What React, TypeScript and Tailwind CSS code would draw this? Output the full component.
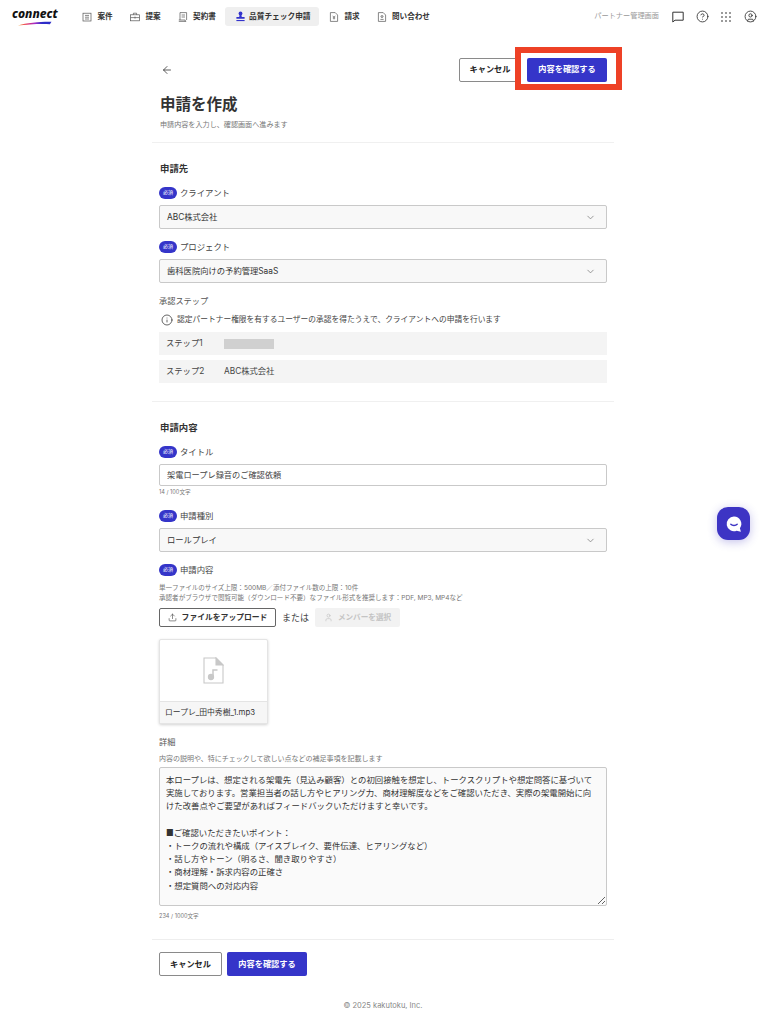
import React from "react";
import { ArrowLeft, ChevronDown, Info, CircleHelp, CircleUser, Upload, User } from "lucide-react";

const font = { fontFamily: '"Inter", "Noto Sans CJK JP", sans-serif' };

function CaseIcon() {
    return (
        <svg className="size-[10px] text-[#555]" viewBox="0 0 10 10" fill="none" stroke="currentColor" strokeWidth="0.7">
            <rect x="1" y="1.2" width="8" height="7.8" />
            <path d="M3 3.4h4M3 5.2h4M3 7h4" />
        </svg>
    );
}

function CaseBagIcon() {
    return (
        <svg className="size-[10px] text-[#555]" viewBox="0 0 10 10" fill="none" stroke="currentColor" strokeWidth="0.7">
            <rect x="0.6" y="2.8" width="8.8" height="6" />
            <path d="M3.4 2.8V1.2h3.2v1.6M0.6 5.6h8.8M5 4.6v2" />
        </svg>
    );
}

function ContractIcon() {
    return (
        <svg className="size-[10px] text-[#555]" viewBox="0 0 10 10" fill="none" stroke="currentColor" strokeWidth="0.7">
            <path d="M2 8V.6h6.6V8M.8 9.4h7.4M.8 8h6.4v1.4" />
            <path d="M3.6 3h3.4M3.6 5h3.4" />
        </svg>
    );
}

function StampIcon() {
    return (
        <svg className="size-[11px] text-[#3333cc]" viewBox="0 0 11 11" fill="currentColor">
            <circle cx="5.5" cy="2.4" r="1.9" />
            <path d="M4.6 3.6h1.8l.4 2.4H9.6v1.8H1.4V6h2.8z" />
            <rect x="1.4" y="9" width="8.2" height="1.1" />
        </svg>
    );
}

function BillIcon({ person }: { person?: boolean }) {
    return (
        <svg className="size-[10px] text-[#555]" viewBox="0 0 10 10" fill="none" stroke="currentColor" strokeWidth="0.7">
            <path d="M1.4.6h4.8l2.4 2.4v6.4H1.4z" />
            {person ? (
                <path d="M3.4 7.4h3.2M5 3.6a1 1 0 1 0 .01 0z" />
            ) : (
                <path d="M3.8 3.8 5 5.4l1.2-1.6M5 5.4v2M3.8 6h2.4" />
            )}
        </svg>
    );
}

function NavItem({ icon, label, active }: { icon: React.ReactNode; label: string; active?: boolean }) {
    return (
        <div
            className={
                active
                    ? "flex h-[19px] w-[94px] items-center gap-[3px] rounded-[3px] bg-[#efefef] pl-[10px] text-[7.7px] font-bold text-[#333]"
                    : "flex h-[19px] items-center gap-[5px] px-[8px] text-[7.6px] font-bold text-[#333]"
            }
        >
            {icon}
            <span className="whitespace-nowrap">{label}</span>
        </div>
    );
}

function Badge() {
    return (
        <span className="flex h-[12px] w-[18px] items-center justify-center rounded-full bg-[#3535c9] text-[5px] text-white">
            必須
        </span>
    );
}

function RequiredLabel({ children }: { children: React.ReactNode }) {
    return (
        <div className="flex h-[12px] items-center gap-[3px] text-[8.4px] text-[#444]">
            <Badge />
            <span>{children}</span>
        </div>
    );
}

function SelectBox({ value }: { value: string }) {
    return (
        <div className="mt-[6px] flex h-[24px] items-center justify-between rounded-[2px] border border-[#c9c9c9] bg-[#f8f8f8] pl-[7px] pr-[10px] text-[8.3px] text-[#333]">
            <span>{value}</span>
            <ChevronDown className="size-[11px] text-[#777]" strokeWidth={1.6} />
        </div>
    );
}

function StepRow({ step, children }: { step: string; children: React.ReactNode }) {
    return (
        <div className="flex h-[23px] items-center bg-[#f4f4f4] pl-[7px] text-[8.3px] text-[#444]">
            <span className="w-[58px]">{step}</span>
            {children}
        </div>
    );
}

function CancelButton({ className }: { className: string }) {
    return (
        <button className={`flex items-center justify-center rounded-[2px] border border-[#8a8a8a] bg-white text-[8.2px] font-bold text-[#222] ${className}`}>
            キャンセル
        </button>
    );
}

function ConfirmButton({ className }: { className: string }) {
    return (
        <button className={`flex w-[80px] items-center justify-center rounded-[2px] bg-[#3535c9] text-[8.2px] font-bold text-white ${className}`}>
            内容を確認する
        </button>
    );
}

const detail = `本ロープレは、想定される架電先（見込み顧客）との初回接触を想定し、トークスクリプトや想定問答に基づいて実施しております。営業担当者の話し方やヒアリング力、商材理解度などをご確認いただき、実際の架電開始に向けた改善点やご要望があればフィードバックいただけますと幸いです。

■ご確認いただきたいポイント：
・トークの流れや構成（アイスブレイク、要件伝達、ヒアリングなど）
・話し方やトーン（明るさ、聞き取りやすさ）
・商材理解・訴求内容の正確さ
・想定質問への対応内容`;

export default function App() {
    return (
        <div className="relative h-[1024px] overflow-hidden bg-white" style={font}>
            <header className="flex h-[33px] items-center justify-between pl-[12px] pr-[10px]">
                <div className="flex items-center">
                    <div className="relative h-[19px] w-[47px]">
                        <span className="absolute left-0 top-[0px] text-[12px] font-extrabold italic leading-[13px] text-[#111]" style={{ fontFamily: '"Noto Sans", sans-serif' }}>
                            connect
                        </span>
                        <svg className="absolute left-[5px] top-[14px] h-[5px] w-[47px]" viewBox="0 0 47 5">
                            <defs>
                                <linearGradient id="logo-line" x1="0" x2="1" y1="0" y2="0">
                                    <stop offset="0" stopColor="#f4a93c" />
                                    <stop offset="0.25" stopColor="#e8345a" />
                                    <stop offset="0.5" stopColor="#a52fc8" />
                                    <stop offset="0.72" stopColor="#2d2dc8" />
                                </linearGradient>
                            </defs>
                            <path d="M1 4.6C10 1.6 24 .6 34.5 .8l-1.6 2.4C22 2.8 10 3.4 1 4.6z" fill="url(#logo-line)" />
                        </svg>
                    </div>
                    <nav className="ml-[15px] flex items-center gap-[1px]">
                        <div className="flex w-[47px] justify-center"><NavItem icon={<CaseIcon />} label="案件" /></div>
                        <div className="flex w-[47px] justify-center"><NavItem icon={<CaseBagIcon />} label="提案" /></div>
                        <div className="flex w-[54px] justify-center"><NavItem icon={<ContractIcon />} label="契約書" /></div>
                        <NavItem active icon={<StampIcon />} label="品質チェック申請" />
                        <div className="ml-[1px] flex w-[47px] justify-center"><NavItem icon={<BillIcon />} label="請求" /></div>
                        <NavItem icon={<BillIcon person />} label="問い合わせ" />
                    </nav>
                </div>
                <div className="flex items-center">
                    <span className="mr-[13px] text-[7.2px] text-[#999]">パートナー管理画面</span>
                    <div className="flex items-center gap-[12px] text-[#333]">
                        <svg className="size-[12px]" viewBox="0 0 12 12" fill="none" stroke="currentColor" strokeWidth="1">
                            <path d="M.8 1.2h10.4v8H3L.8 11z" />
                        </svg>
                        <CircleHelp className="-m-[0.5px] size-[13px]" strokeWidth={1.6} />
                        <svg className="size-[12px]" viewBox="0 0 12 12" fill="currentColor">
                            {[2, 6, 10].map((y) =>
                                [2, 6, 10].map((x) => <rect key={`${x}-${y}`} x={x - 0.7} y={y - 0.7} width="1.4" height="1.4" />)
                            )}
                        </svg>
                        <CircleUser className="-m-[0.5px] size-[13px]" strokeWidth={1.6} />
                    </div>
                </div>
            </header>

            <main className="w-[462px]" style={{ marginLeft: 152 }}>
                <div className="mt-[25px] flex h-[23px] items-center justify-between px-[7px]">
                    <ArrowLeft className="ml-[2px] size-[12px] text-[#333]" strokeWidth={1.6} />
                    <div className="flex gap-[6px]">
                        <CancelButton className="h-[24px] w-[62px]" />
                        <ConfirmButton className="h-[24px]" />
                    </div>
                </div>

                <div className="border-b border-[#f0f0f0] px-[8px] pb-[12px]">
                    <h1 className="mt-[14px] text-[15.5px] font-bold leading-[20px] text-[#333]">申請を作成</h1>
                    <p className="mt-[5px] text-[7.1px] leading-[10px] text-[#777]">申請内容を入力し、確認画面へ進みます</p>
                </div>

                <section className="border-b border-[#f0f0f0] px-[7px] pb-[18px]">
                    <h2 className="mt-[20px] pl-[1px] text-[9.4px] font-bold leading-[12px] text-[#333]">申請先</h2>
                    <div className="mt-[12px]"><RequiredLabel>クライアント</RequiredLabel></div>
                    <SelectBox value="ABC株式会社" />
                    <div className="mt-[12px]"><RequiredLabel>プロジェクト</RequiredLabel></div>
                    <SelectBox value="歯科医院向けの予約管理SaaS" />
                    <p className="mt-[12px] text-[8.2px] leading-[12px] text-[#555]">承認ステップ</p>
                    <div className="mt-[7px] flex h-[12px] items-center gap-[4px] pl-[2px] text-[7.74px] text-[#444]">
                        <Info className="size-[12px] text-[#333]" strokeWidth={1.5} />
                        <span>認定パートナー権限を有するユーザーの承認を得たうえで、クライアントへの申請を行います</span>
                    </div>
                    <div className="mt-[6px] flex flex-col gap-[5px]">
                        <StepRow step="ステップ1"><span className="h-[10px] w-[50px] bg-[#d0d0d0]" /></StepRow>
                        <StepRow step="ステップ2"><span>ABC株式会社</span></StepRow>
                    </div>
                </section>

                <section className="border-b border-[#eeeeee] px-[7px] pb-[20px]">
                    <h2 className="mt-[20px] pl-[1px] text-[9.4px] font-bold leading-[12px] text-[#333]">申請内容</h2>
                    <div className="mt-[12px]"><RequiredLabel>タイトル</RequiredLabel></div>
                    <div className="mt-[6px] flex h-[22px] items-center rounded-[2px] border border-[#c9c9c9] pl-[7px] text-[8.2px] text-[#444]">
                        架電ロープレ録音のご確認依頼
                    </div>
                    <p className="mt-[3px] text-[5.6px] leading-[6px] text-[#777]">14 / 100文字</p>
                    <div className="mt-[15px]"><RequiredLabel>申請種別</RequiredLabel></div>
                    <SelectBox value="ロールプレイ" />
                    <div className="mt-[12px]"><RequiredLabel>申請内容</RequiredLabel></div>
                    <p className="mt-[7px] text-[6.55px] leading-[10px] text-[#777]">
                        単一ファイルのサイズ上限：500MB／添付ファイル数の上限：10件
                        <br />
                        承認者がブラウザで閲覧可能（ダウンロード不要）なファイル形式を推奨します：PDF, MP3, MP4など
                    </p>
                    <div className="mt-[5px] flex h-[19px] items-center">
                        <button className="flex h-[19px] w-[117px] items-center justify-center gap-[5px] rounded-[2px] border border-[#666] bg-white text-[7.8px] font-bold text-[#333]">
                            <Upload className="size-[9px] text-[#555]" strokeWidth={1.8} />
                            ファイルをアップロード
                        </button>
                        <span className="ml-[6px] text-[9px] text-[#444]">または</span>
                        <button className="ml-[6px] flex h-[19px] w-[85px] items-center justify-center gap-[5px] rounded-[2px] bg-[#f2f2f2] text-[7.6px] font-bold text-[#c4c4c4]">
                            <User className="size-[9px]" strokeWidth={1.8} />
                            メンバーを選択
                        </button>
                    </div>
                    <div className="mt-[12px] w-[109px] overflow-hidden rounded-[2px] border border-[#e4e4e4] bg-white shadow-[0_1px_3px_rgba(0,0,0,0.18)]">
                        <div className="flex h-[61px] items-center justify-center">
                            <svg className="h-[27px] w-[21px] text-[#c8c8c8]" viewBox="0 0 21 27" fill="none" stroke="currentColor" strokeWidth="1.1">
                                <path d="M1 1h12l7 7v18H1z" />
                                <path d="M13 1l7 7h-7z" fill="currentColor" />
                                <circle cx="8" cy="20" r="2.6" fill="currentColor" />
                                <path d="M10 20v-7h4.5" strokeWidth="1.5" />
                            </svg>
                        </div>
                        <div className="flex h-[22px] items-center border-t border-[#e4e4e4] bg-[#f6f6f6] pl-[5px] text-[7.8px] text-[#333]">
                            ロープレ_田中秀樹_1.mp3
                        </div>
                    </div>
                    <p className="mt-[12px] text-[8.2px] leading-[12px] text-[#555]">詳細</p>
                    <p className="mt-[6px] text-[7px] leading-[10px] text-[#777]">内容の説明や、特にチェックして欲しい点などの補足事項を記載します</p>
                    <textarea
                        readOnly
                        defaultValue={detail}
                        className="mt-[3px] block h-[139px] w-full rounded-[2px] border border-[#c9c9c9] bg-[#fafafa] py-[6px] pl-[6px] pr-[12px] text-[8.4px] leading-[13.2px] text-[#333] outline-none"
                    />
                    <p className="mt-[7px] text-[5.6px] leading-[6px] text-[#777]">234 / 1000文字</p>
                </section>

                <div className="mt-[12px] flex gap-[5px] px-[7px]">
                    <CancelButton className="h-[24px] w-[63px]" />
                    <ConfirmButton className="h-[24px]" />
                </div>
            </main>

            <footer className="mt-[25px] text-center text-[7.5px] leading-[10px] text-[#888]">
                © 2025 kakutoku, Inc.
            </footer>

            {/* annotation box over the confirm button */}
            <div className="pointer-events-none absolute left-[515px] top-[47px] h-[43px] w-[107px] border-[6px] border-[#ee4126]" />

            <button className="absolute left-[717px] top-[507px] flex size-[33px] items-center justify-center rounded-[11px] bg-[#3d34c4] shadow-[0_2px_10px_rgba(60,50,190,0.3)]">
                <svg className="size-[20px]" viewBox="0 0 20 20">
                    <path d="M10 2.6a7.3 7.3 0 1 0 2.6 14.1l4.3 1.1-1-3.6A7.3 7.3 0 0 0 10 2.6z" fill="#fff" />
                    <path d="M6.8 10.2c1.6 1.7 4.8 1.7 6.4 0" fill="none" stroke="#3d34c4" strokeWidth="1.4" strokeLinecap="round" />
                </svg>
            </button>
        </div>
    );
}
